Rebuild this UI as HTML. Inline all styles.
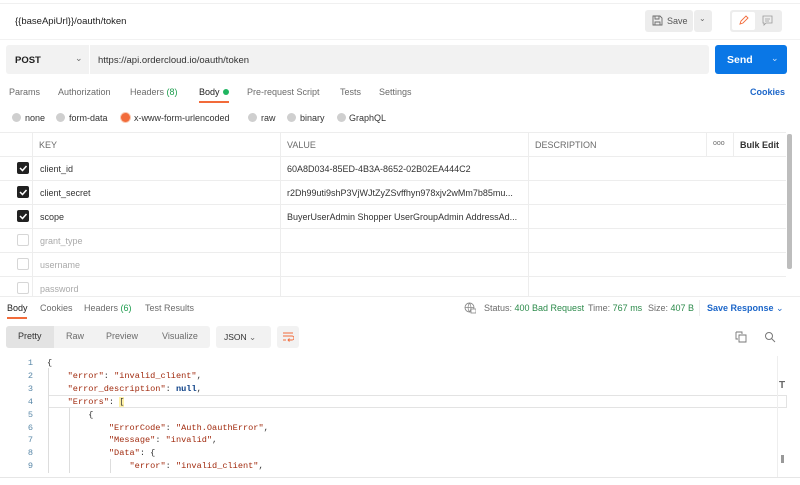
<!DOCTYPE html>
<html><head><meta charset="utf-8"><style>
*{box-sizing:border-box;margin:0;padding:0}
body{width:800px;height:485px;overflow:hidden;background:#fff;font-family:"Liberation Sans",sans-serif;font-size:9px;color:#212121;position:relative}
.a{position:absolute;white-space:nowrap}
.g{color:#6b6b6b}
.mono{font-family:"Liberation Mono",monospace;font-size:8.6px}
.hl{position:absolute;left:0;width:786px;height:1px;background:#ededed}
.vl{position:absolute;width:1px;background:#ededed}
.cb{position:absolute;left:17px;width:12px;height:12px;border-radius:2px}
.cb.on{background:#212121}
.cb.off{border:1px solid #d6d6d6}
.rad{position:absolute;top:113px;width:9px;height:9px;border-radius:50%;background:#cfcfcf}
.s{color:#a12b0f}.k{color:#a12b0f}.v{color:#0b3f86;font-weight:bold}
</style></head><body>
<div class="hl" style="top:3px;width:800px;background:#f0f0f0"></div>
<div class="a" style="left:15px;top:16px;font-size:9.5px;color:#212121">{{baseApiUrl}}/oauth/token</div>
<div class="a" style="left:645px;top:10px;width:48px;height:22px;background:#ededed;border-radius:3px"></div>
<div class="a" style="left:694px;top:10px;width:18px;height:22px;background:#ededed;border-radius:3px"></div>
<svg class="a" style="left:652px;top:15px" width="11" height="11" viewBox="0 0 11 11"><path d="M1 1h7l2 2v7H1z M3 1v3h4V1 M3 10V7h5v3" fill="none" stroke="#6b6b6b" stroke-width="0.9"/></svg>
<div class="a g" style="left:667px;top:16px;font-size:9px;color:#555">Save</div>
<div class="a g" style="left:699px;top:14px;font-size:8px">⌄</div>
<div class="a" style="left:730px;top:10px;width:52px;height:22px;background:#ededed;border-radius:3px"></div>
<div class="a" style="left:732px;top:12px;width:23px;height:18px;background:#fff;border-radius:2px"></div>
<svg class="a" style="left:738px;top:15px" width="11" height="11" viewBox="0 0 11 11"><path d="M2 9l1-3 5-5 2 2-5 5z" fill="none" stroke="#f26b3a" stroke-width="0.9"/></svg>
<svg class="a" style="left:762px;top:15px" width="11" height="11" viewBox="0 0 11 11"><path d="M1 1h9v7H4l-2 2V8H1z M3 4h5M3 6h4" fill="none" stroke="#999" stroke-width="0.8"/></svg>
<div class="hl" style="top:39px;width:800px;background:#f2f2f2"></div>
<div class="a" style="left:6px;top:45px;width:703px;height:29px;background:#f2f2f2;border-radius:3px"></div>
<div class="a" style="left:89px;top:45px;width:1px;height:29px;background:#fff"></div>
<div class="a" style="left:15px;top:55px;font-weight:bold;font-size:9.5px">POST</div>
<div class="a g" style="left:75px;top:53px;font-size:9px">⌄</div>
<div class="a" style="left:98px;top:55px;font-size:9.5px;color:#333">https://api.ordercloud.io/oauth/token</div>
<div class="a" style="left:715px;top:45px;width:72px;height:29px;background:#0a77e6;border-radius:3px"></div>
<div class="a" style="left:727px;top:54px;font-weight:bold;color:#fff;font-size:10.5px">Send</div>
<div class="a" style="left:771px;top:53px;color:#cfe3fa;font-size:9px">⌄</div>
<div class="a g" style="left:9px;top:87px">Params</div>
<div class="a g" style="left:58px;top:87px">Authorization</div>
<div class="a g" style="left:130px;top:87px">Headers <span style="color:#1d9c4d">(8)</span></div>
<div class="a" style="left:199px;top:87px;color:#212121">Body</div>
<div class="a" style="left:223px;top:89px;width:6px;height:6px;border-radius:50%;background:#1fb560"></div>
<div class="a" style="left:199px;top:101px;width:30px;height:2px;background:#f26b3a"></div>
<div class="a g" style="left:247px;top:87px">Pre-request Script</div>
<div class="a g" style="left:340px;top:87px">Tests</div>
<div class="a g" style="left:379px;top:87px">Settings</div>
<div class="a" style="left:750px;top:87px;color:#1c66c9;font-weight:bold">Cookies</div>
<div class="rad" style="left:12px"></div><div class="a" style="left:25px;top:113px;color:#333">none</div>
<div class="rad" style="left:56px"></div><div class="a" style="left:69px;top:113px;color:#333">form-data</div>
<div class="a" style="left:121px;top:113px;width:9px;height:9px;border-radius:50%;background:#f26b3a;box-shadow:0 0 0 1px #f9c9b2"></div><div class="a" style="left:134px;top:113px;color:#333">x-www-form-urlencoded</div>
<div class="rad" style="left:248px"></div><div class="a" style="left:261px;top:113px;color:#333">raw</div>
<div class="rad" style="left:287px"></div><div class="a" style="left:300px;top:113px;color:#333">binary</div>
<div class="rad" style="left:337px"></div><div class="a" style="left:349px;top:113px;color:#333">GraphQL</div>
<div class="hl" style="top:132px"></div>
<div class="hl" style="top:156px"></div><div class="hl" style="top:180px"></div><div class="hl" style="top:204px"></div>
<div class="hl" style="top:228px"></div><div class="hl" style="top:252px"></div><div class="hl" style="top:276px"></div>
<div class="hl" style="top:296px;width:800px"></div>
<div class="vl" style="left:32px;top:132px;height:164px"></div>
<div class="vl" style="left:280px;top:132px;height:164px"></div>
<div class="vl" style="left:528px;top:132px;height:164px"></div>
<div class="vl" style="left:706px;top:132px;height:24px"></div>
<div class="vl" style="left:733px;top:132px;height:24px"></div>
<div class="a" style="left:787px;top:134px;width:5px;height:135px;background:#bdbdbd;border-radius:2px"></div>
<div class="a g" style="left:39px;top:140px">KEY</div>
<div class="a g" style="left:287px;top:140px">VALUE</div>
<div class="a g" style="left:535px;top:140px">DESCRIPTION</div>
<div class="a g" style="left:713px;top:140px;font-size:7px">ooo</div>
<div class="a" style="left:740px;top:140px;font-weight:bold;color:#333">Bulk Edit</div>
<div class="cb on" style="top:162px"></div><div class="cb on" style="top:186px"></div><div class="cb on" style="top:210px"></div>
<div class="cb off" style="top:234px"></div><div class="cb off" style="top:258px"></div><div class="cb off" style="top:282px"></div>
<svg class="a" style="left:17px;top:162px" width="12" height="60" viewBox="0 0 12 60"><path d="M3 6l2.5 2.5L9.5 4M3 30l2.5 2.5L9.5 28M3 54l2.5 2.5L9.5 52" fill="none" stroke="#fff" stroke-width="1.5"/></svg>
<div class="a" style="left:40px;top:164px;color:#333">client_id</div>
<div class="a" style="left:40px;top:188px;color:#333">client_secret</div>
<div class="a" style="left:40px;top:212px;color:#333">scope</div>
<div class="a" style="left:40px;top:236px;color:#aaa">grant_type</div>
<div class="a" style="left:40px;top:260px;color:#aaa">username</div>
<div class="a" style="left:40px;top:284px;color:#aaa">password</div>
<div class="a" style="left:287px;top:164px;color:#333">60A8D034-85ED-4B3A-8652-02B02EA444C2</div>
<div class="a" style="left:287px;top:188px;color:#333">r2Dh99uti9shP3VjWJtZyZSvffhyn978xjv2wMm7b85mu...</div>
<div class="a" style="left:287px;top:212px;color:#333">BuyerUserAdmin Shopper UserGroupAdmin AddressAd...</div>
<div class="a" style="left:7px;top:303px;color:#212121">Body</div>
<div class="a" style="left:7px;top:317px;width:20px;height:2px;background:#f26b3a"></div>
<div class="a g" style="left:40px;top:303px">Cookies</div>
<div class="a g" style="left:84px;top:303px">Headers <span style="color:#1d9c4d">(6)</span></div>
<div class="a g" style="left:145px;top:303px">Test Results</div>
<svg class="a" style="left:464px;top:302px" width="12" height="12" viewBox="0 0 12 12"><circle cx="5.5" cy="5.5" r="4.5" fill="none" stroke="#888" stroke-width="0.9"/><path d="M1 5.5h9M5.5 1c-2 3-2 6 0 9M5.5 1c2 3 2 6 0 9" fill="none" stroke="#888" stroke-width="0.7"/><rect x="7" y="7" width="5" height="4" fill="#fff" stroke="#888" stroke-width="0.8"/></svg>
<div class="a g" style="left:484px;top:303px">Status: <span style="color:#2b8a4a">400 Bad Request</span></div>
<div class="a g" style="left:588px;top:303px">Time: <span style="color:#2b8a4a">767 ms</span></div>
<div class="a g" style="left:648px;top:303px">Size: <span style="color:#2b8a4a">407 B</span></div>
<div class="vl" style="left:699px;top:300px;height:16px"></div>
<div class="a" style="left:707px;top:303px;color:#1c66c9;font-weight:bold">Save Response <span style="font-weight:normal">⌄</span></div>
<div class="a" style="left:6px;top:326px;width:204px;height:22px;background:#f2f2f2;border-radius:3px"></div>
<div class="a" style="left:6px;top:326px;width:48px;height:22px;background:#e3e3e3;border-radius:3px 0 0 3px"></div>
<div class="a" style="left:18px;top:331px;color:#333">Pretty</div>
<div class="a g" style="left:66px;top:331px">Raw</div>
<div class="a g" style="left:106px;top:331px">Preview</div>
<div class="a g" style="left:162px;top:331px">Visualize</div>
<div class="a" style="left:216px;top:326px;width:55px;height:22px;background:#f2f2f2;border-radius:3px"></div>
<div class="a" style="left:224px;top:332px;font-size:8.5px;color:#333">JSON <span class="g">⌄</span></div>
<div class="a" style="left:277px;top:326px;width:22px;height:22px;background:#f2f2f2;border-radius:3px"></div>
<svg class="a" style="left:282px;top:331px" width="12" height="12" viewBox="0 0 12 12"><path d="M1 2h10M1 5h9a2 2 0 010 4H6M7.5 7.5L6 9l1.5 1.5M1 9h3" fill="none" stroke="#f26b3a" stroke-width="0.9"/></svg>
<svg class="a" style="left:735px;top:331px" width="12" height="12" viewBox="0 0 12 12"><path d="M1 1h6v2M1 1v7h2M4 4h7v7H4z" fill="none" stroke="#777" stroke-width="0.9"/></svg>
<svg class="a" style="left:764px;top:331px" width="12" height="12" viewBox="0 0 12 12"><circle cx="5" cy="5" r="3.5" fill="none" stroke="#777" stroke-width="1"/><path d="M7.5 7.5L11 11" stroke="#777" stroke-width="1"/></svg>
<div class="a" style="left:48px;top:395px;width:739px;height:13px;border:1px solid #e3e3e3"></div>
<div class="vl" style="left:48px;top:368px;height:105px;background:#ddd"></div>
<div class="vl" style="left:69px;top:408px;height:65px;background:#ddd"></div>
<div class="vl" style="left:110px;top:459px;height:14px;background:#ddd"></div>
<div class="vl" style="left:777px;top:356px;height:122px;background:#eee"></div>
<div class="a" style="left:779px;top:380px;font-weight:bold;color:#666;font-size:10px">T</div>
<div class="a" style="left:781px;top:455px;width:3px;height:8px;background:#999"></div>
<div class="a mono" style="left:0;top:357px;width:33px;text-align:right;color:#5a88a8;line-height:12.9px">1<br>2<br>3<br>4<br>5<br>6<br>7<br>8<br>9</div>
<div class="a mono" style="left:47px;top:357px;line-height:12.9px;color:#333;white-space:pre">{
    <span class="k">"error"</span>: <span class="s">"invalid_client"</span>,
    <span class="k">"error_description"</span>: <span class="v">null</span>,
    <span class="k">"Errors"</span>: <span style="background:#fff2a8">[</span>
        {
            <span class="k">"ErrorCode"</span>: <span class="s">"Auth.OauthError"</span>,
            <span class="k">"Message"</span>: <span class="s">"invalid"</span>,
            <span class="k">"Data"</span>: {
                <span class="k">"error"</span>: <span class="s">"invalid_client"</span>,</div>
<div class="hl" style="top:477px;width:800px;background:#e6e6e6"></div>
</body></html>
